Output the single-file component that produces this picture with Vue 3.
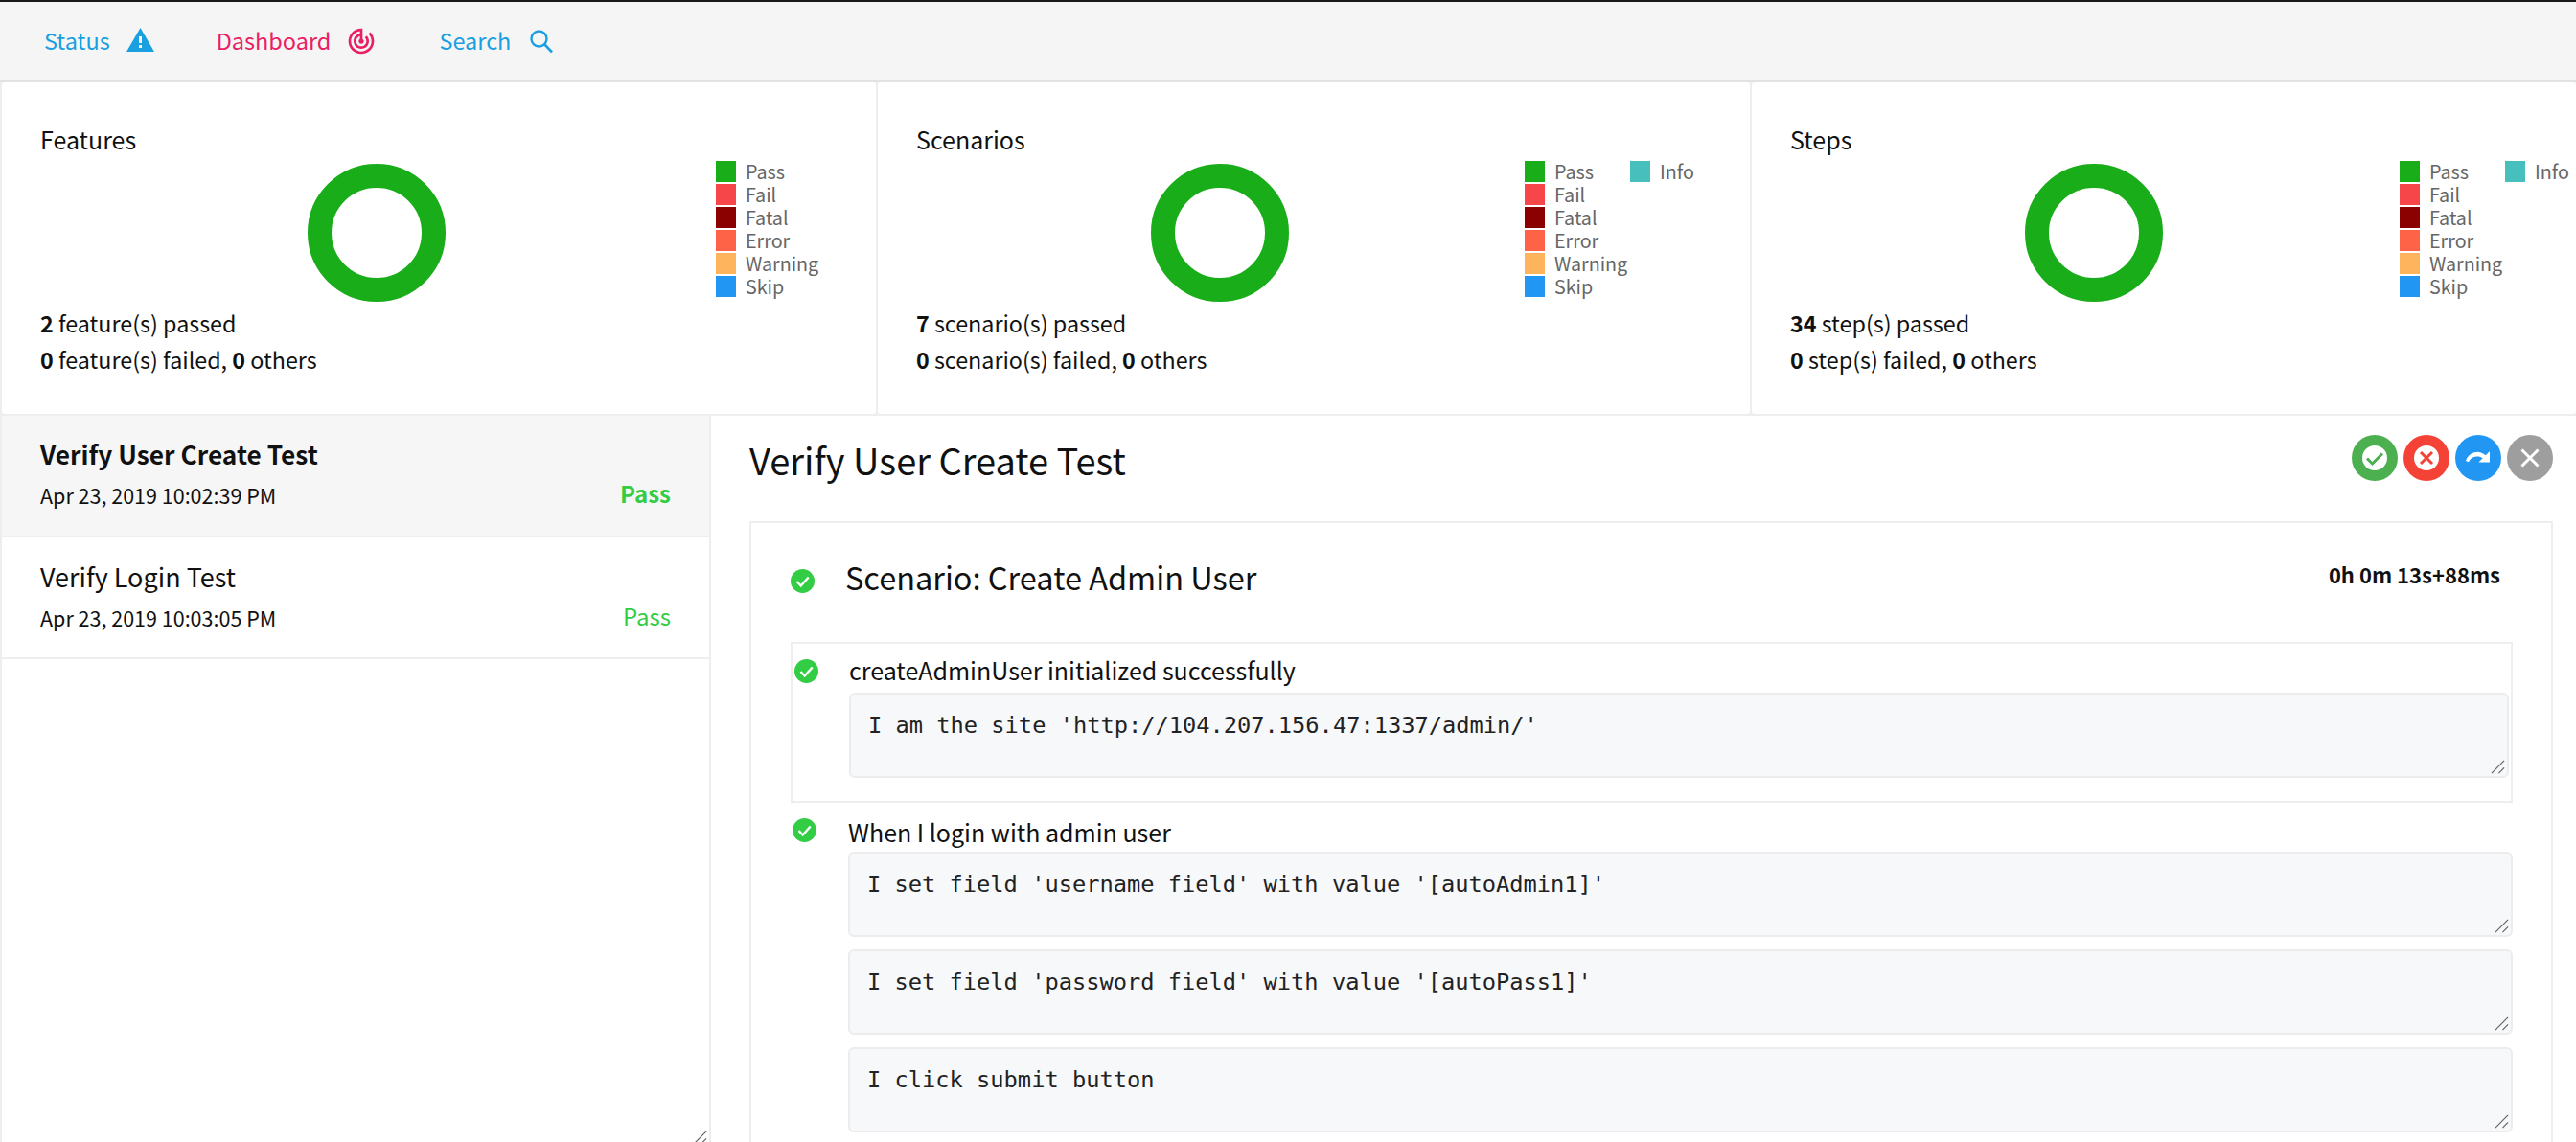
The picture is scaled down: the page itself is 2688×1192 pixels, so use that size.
<script setup>
const nav = [
  { label: 'Status', cls: 'blue', icon: 'warn' },
  { label: 'Dashboard', cls: 'pink', icon: 'track' },
  { label: 'Search', cls: 'blue', icon: 'search' }
]
const legend = [
  ['Pass', '#1aad1a'], ['Fail', '#f7464a'], ['Fatal', '#8b0000'],
  ['Error', '#ff6347'], ['Warning', '#fdb45c'], ['Skip', '#2196f3']
]
const cards = [
  { title: 'Features', noun: 'feature(s)', n: 2, info: false, cls: 'c1' },
  { title: 'Scenarios', noun: 'scenario(s)', n: 7, info: true, cls: 'c2' },
  { title: 'Steps', noun: 'step(s)', n: 34, info: true, cls: 'c3' }
]
const tests = [
  { name: 'Verify User Create Test', date: 'Apr 23, 2019 10:02:39 PM', active: true },
  { name: 'Verify Login Test', date: 'Apr 23, 2019 10:03:05 PM', active: false }
]
const whenSteps = [
  "I set field 'username field' with value '[autoAdmin1]'",
  "I set field 'password field' with value '[autoPass1]'",
  'I click submit button'
]
</script>

<template>
  <div class="page">
    <nav class="nav">
      <a v-for="n in nav" :key="n.label" class="nav-item" :class="n.cls">
        <span>{{ n.label }}</span>
        <svg v-if="n.icon === 'warn'" class="ico-warn" viewBox="0 0 29 25"><path fill="currentColor" d="M14.5 0 29 25H0z"/><path fill="#f5f5f5" d="M13 9h3v7h-3zM13 18h3v3h-3z"/></svg>
        <svg v-else-if="n.icon === 'track'" class="ico-track" viewBox="0 0 24 24"><path fill="currentColor" d="M19.07 4.93l-1.41 1.41A8.014 8.014 0 0 1 20 12c0 4.42-3.58 8-8 8s-8-3.58-8-8c0-4.08 3.05-7.44 7-7.93v2.02C8.16 6.57 6 9.03 6 12c0 3.31 2.69 6 6 6s6-2.69 6-6c0-1.66-.67-3.16-1.76-4.24l-1.41 1.41C15.55 9.9 16 10.9 16 12c0 2.21-1.79 4-4 4s-4-1.79-4-4c0-1.86 1.28-3.41 3-3.86v2.14c-.6.35-1 .98-1 1.72 0 1.1.9 2 2 2s2-.9 2-2c0-.74-.4-1.38-1-1.72V2h-1C6.48 2 2 6.48 2 12s4.48 10 10 10 10-4.48 10-10c0-2.76-1.12-5.26-2.93-7.07z"/></svg>
        <svg v-else class="ico-search" viewBox="0 0 24 24"><circle cx="9.5" cy="9.5" r="8" fill="none" stroke="currentColor" stroke-width="2.4"/><path d="M15 15l8 8.5" fill="none" stroke="currentColor" stroke-width="2.6"/></svg>
      </a>
    </nav>

    <section class="stats">
      <div v-for="c in cards" :key="c.title" class="card" :class="c.cls">
        <div class="card-main">
          <h3 class="card-title">{{ c.title }}</h3>
          <div class="donut-wrap"><div class="donut"></div></div>
          <p class="sum"><b>{{ c.n }}</b> {{ c.noun }} passed</p>
          <p class="sum"><b>0</b> {{ c.noun }} failed, <b>0</b> others</p>
        </div>
        <div class="legend">
          <ul class="legend-col">
            <li v-for="l in legend" :key="l[0]"><i :style="{ background: l[1] }"></i>{{ l[0] }}</li>
          </ul>
          <ul v-if="c.info" class="legend-col info">
            <li><i class="teal"></i>Info</li>
          </ul>
        </div>
      </div>
    </section>

    <main class="main">
      <aside class="side">
        <div v-for="t in tests" :key="t.name" class="test" :class="{ active: t.active }">
          <div class="test-name">{{ t.name }}</div>
          <div class="test-meta"><span>{{ t.date }}</span><span class="pass">Pass</span></div>
        </div>
        <svg class="grip side-grip" viewBox="0 0 16 16"><path d="M1 15 15 1M9 15l6-6" stroke="#666" stroke-width="1.3" fill="none"/></svg>
      </aside>

      <div class="detail">
        <header class="detail-head">
          <h1>Verify User Create Test</h1>
          <div class="filters">
            <span class="fbtn green"><svg viewBox="0 0 48 48"><circle cx="24" cy="24" r="13" fill="#fff"/><path d="M16 24.500l5.500 5.500 10.500-10.500" fill="none" stroke="#4caf50" stroke-width="3"/></svg></span>
            <span class="fbtn red"><svg viewBox="0 0 48 48"><circle cx="24" cy="24" r="13" fill="#fff"/><path d="M18 18l12 12M30 18 18 30" fill="none" stroke="#f44336" stroke-width="3"/></svg></span>
            <span class="fbtn sky"><svg viewBox="0 0 48 48"><path fill="#fff" d="M36 17v11.500H24.500l4.200-4.200A9.700 9.700 0 0 0 14 28.300l-3-1.300A12.700 12.700 0 0 1 31.800 21.200z"/></svg></span>
            <span class="fbtn grey"><svg viewBox="0 0 48 48"><path d="M15.500 15.500l17 17M32.500 15.500l-17 17" fill="none" stroke="#fff" stroke-width="3"/></svg></span>
          </div>
        </header>

        <article class="scenario">
          <div class="sc-head">
            <svg class="chk" viewBox="0 0 25 25"><circle cx="12.500" cy="12.500" r="12.500" fill="#32cd44"/><path d="M6.500 13l4.200 4.500 8-9" fill="none" stroke="#fff" stroke-width="2.400"/></svg>
            <h2>Scenario: Create Admin User</h2>
            <b class="time">0h 0m 13s+88ms</b>
          </div>

          <div class="step boxed">
            <svg class="chk" viewBox="0 0 25 25"><circle cx="12.500" cy="12.500" r="12.500" fill="#32cd44"/><path d="M6.500 13l4.200 4.500 8-9" fill="none" stroke="#fff" stroke-width="2.400"/></svg>
            <div class="step-body">
              <div class="step-title">createAdminUser initialized successfully</div>
              <div class="code">I am the site 'http://104.207.156.47:1337/admin/'<svg class="grip" viewBox="0 0 16 16"><path d="M1 15 15 1M9 15l6-6" stroke="#666" stroke-width="1.300" fill="none"/></svg></div>
            </div>
          </div>

          <div class="step when">
            <svg class="chk" viewBox="0 0 25 25"><circle cx="12.500" cy="12.500" r="12.500" fill="#32cd44"/><path d="M6.500 13l4.200 4.500 8-9" fill="none" stroke="#fff" stroke-width="2.400"/></svg>
            <div class="step-body">
              <div class="step-title">When I login with admin user</div>
              <div v-for="s in whenSteps" :key="s" class="code">{{ s }}<svg class="grip" viewBox="0 0 16 16"><path d="M1 15 15 1M9 15l6-6" stroke="#666" stroke-width="1.300" fill="none"/></svg></div>
            </div>
          </div>
        </article>
      </div>
    </main>
  </div>
</template>

<style>
html, body { margin: 0; background: #fff; }
</style>

<style scoped>
.page {
  width: 2688px; height: 1192px; overflow: hidden; display: flex; flex-direction: column;
  border-top: 2px solid #1a1a1a; box-sizing: border-box; background: #fff;
  font-family: "Noto Sans CJK SC", "Noto Sans", sans-serif; color: #111;
}
.nav {
  flex: none; height: 82px; box-sizing: content-box; display: flex; align-items: center;
  background: #f5f5f5; border-bottom: 2px solid #e2e2e2; padding-left: 46px; gap: 65px;
}
.nav-item { display: flex; align-items: center; gap: 17px; font-size: 23.5px; line-height: 1; }
.blue { color: #1a9fe0; }
.pink { color: #e91e63; }
.ico-warn { width: 29px; height: 25px; margin-top: -3px; }
.ico-track { width: 32px; height: 32px; margin-left: -1px; margin-top: -1px; }
.ico-search { width: 24px; height: 24px; margin-left: 3px; }

.stats {
  flex: none; height: 348px; box-sizing: border-box; display: flex; gap: 2px;
  background: #eee; padding: 0 0 2px 2px;
}
.card { flex: none; width: 912px; height: 346px; background: #fff; border-radius: 3px; position: relative; display: flex; box-sizing: border-box; }
.c2 { width: 910px; }
.c3 { width: 860px; }
.card-main { flex: none; width: 782px; padding: 41px 0 0 40px; box-sizing: border-box; }
.c2 .card-main { width: 675px; padding-left: 40px; }
.c3 .card-main { width: 676px; padding-left: 40px; }
.card-title { margin: 0; font-size: 25px; font-weight: 400; line-height: 36px; }
.donut-wrap { height: 144px; margin-top: 8px; display: flex; }
.donut {
  width: 144px; height: 144px; border-radius: 50%; box-sizing: border-box;
  border: 25px solid #1aad1a; margin-left: 279px;
}
.c2 .donut { margin-left: 245px; }
.c3 .donut { margin-left: 245px; }
.sum { margin: 0; font-size: 23.3px; line-height: 38px; white-space: nowrap; }
.sum:first-of-type { margin-top: 3px; }
.sum b { font-weight: 700; }
.legend { display: flex; padding-top: 81px; gap: 0; font-size: 19.7px; color: #666; }
.legend-col { list-style: none; margin: 0; padding: 0; width: 110px; }
.legend-col li { display: flex; align-items: center; height: 24px; line-height: 24px; }
.legend-col i { flex: none; width: 21px; height: 22px; margin-right: 10px; }
.legend-col .teal { background: #46bfbd; }
.c1 .legend { margin-left: -37px; }

.main { flex: 1; min-height: 0; display: flex; }
.side { flex: none; width: 742px; box-sizing: border-box; border-right: 2px solid #eee; padding-left: 2px; position: relative; background: linear-gradient(90deg, #eee 2px, #fff 2px); }
.test { height: 127px; box-sizing: border-box; border-bottom: 2px solid #eee; padding: 23px 40px 0; }
.test.active { background: #f6f6f6; padding-top: 22px; }
.test-name { font-size: 27px; line-height: 36px; }
.active .test-name { font-size: 26.3px; font-weight: 700; }
.test-meta { display: flex; justify-content: space-between; align-items: flex-start; font-size: 21.5px; line-height: 30px; margin-top: 10px; }
.pass { color: #32cd44; font-size: 24px; line-height: 26px; }
.active .pass { font-weight: 600; }
.side-grip { position: absolute; right: 2px; bottom: -3px; }
.grip { width: 15px; height: 15px; }

.detail { flex: 1; min-width: 0; padding: 0 24px 0 40px; }
.detail-head { height: 110px; display: flex; justify-content: space-between; align-items: flex-start; }
.detail-head h1 { margin: 22px 0 0; font-size: 38px; line-height: 48px; font-weight: 400; }
.filters { display: flex; gap: 6px; margin-top: 20px; }
.fbtn { width: 48px; height: 48px; border-radius: 50%; display: block; }
.fbtn svg { width: 48px; height: 48px; display: block; }
.green { background: #4caf50; }
.red { background: #f44336; }
.sky { background: #2196f3; }
.grey { background: #9e9e9e; }

.scenario { border: 2px solid #eee; padding: 0 40px 0 41px; height: 800px; box-sizing: border-box; }
.sc-head { height: 124px; display: flex; align-items: flex-start; }
.sc-head .chk { margin-top: 48px; }
.sc-head h2 { margin: 32px 0 0 32px; font-size: 32.500px; line-height: 48px; font-weight: 400; }
.time { margin: 35px 13px 0 auto; font-size: 22px; line-height: 36px; font-weight: 700; }
.chk { flex: none; width: 25px; height: 25px; display: block; }
.step { display: flex; }
.step.boxed { border: 2px solid #eee; height: 168px; box-sizing: border-box; padding: 16px 0 0 2px; }
.step.boxed .chk { margin-top: 0; margin-right: 33px; }
.step.boxed .step-body { padding: 0; margin-left: -1px; }
.step.boxed .step-title { margin-top: -5px; }
.step.boxed .code { margin-top: 8px; margin-right: 2px; }
.step.when { padding-top: 16px; margin-top: 0; }
.step.when .chk { margin: 0 33px 0 2px; }
.step.when .step-title { margin-top: -2px; }
.step-body { flex: 1; min-width: 0; }
.step-title { font-size: 25px; line-height: 32px; }
.code {
  position: relative; height: 89px; box-sizing: border-box; border: 2px solid #ececee; border-radius: 6px;
  background: #f7f8fa; margin-top: 5px; margin-bottom: 13px; padding: 15px 18px;
  font-family: "DejaVu Sans Mono", monospace; font-size: 23.7px; line-height: 34px; color: #222; white-space: pre;
}
.code .grip { position: absolute; right: 2px; bottom: 2px; }
</style>
